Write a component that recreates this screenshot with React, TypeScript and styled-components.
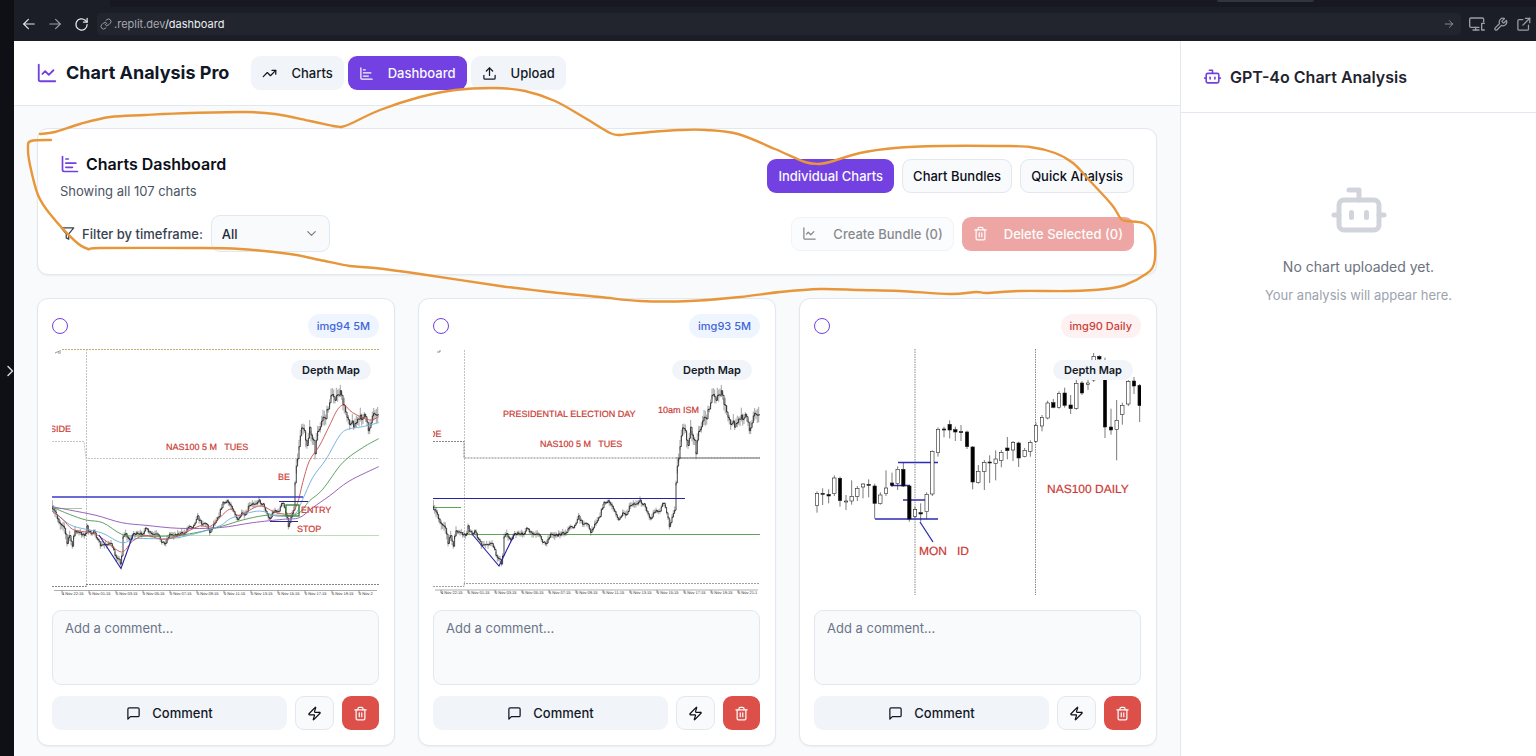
import React from "react";
import styled, { createGlobalStyle, css } from "styled-components";

const Global = createGlobalStyle`
  *, *::before, *::after { box-sizing: border-box; }
  html, body, #root { height: 100%; }
  body {
    margin: 0;
    background: #0e1015;
    color: #0f172a;
    font-family: Inter, "Liberation Sans", sans-serif;
    font-size: 13px;
    line-height: 20px;
    overflow: hidden;
  }
  button, select, textarea, input { font: inherit; color: inherit; margin: 0; }
  h1, h2, p { margin: 0; }
`;

/* ---------- icons ---------- */

const Svg = styled.svg<{ $size?: number; $weight?: number }>`
  width: ${(p) => p.$size ?? 15}px;
  height: ${(p) => p.$size ?? 15}px;
  flex: none;
  fill: none;
  stroke: currentColor;
  stroke-width: ${(p) => p.$weight ?? 2};
  stroke-linecap: round;
  stroke-linejoin: round;
`;

const shapes = {
  line: ["M3 3v16a2 2 0 0 0 2 2h16", "m19 9-5 5-4-4-3 3"],
  bars: ["M3 3v16a2 2 0 0 0 2 2h16", "M7 16h8", "M7 11h12", "M7 6h3"],
  trend: ["M22 7 13.5 15.5 8.5 10.5 2 17", "M16 7h6v6"],
  upload: ["M21 15v4a2 2 0 0 1-2 2H5a2 2 0 0 1-2-2v-4", "M17 8l-5-5-5 5", "M12 3v12"],
  bot: ["M12 8V4H8", "M6 8h12a2 2 0 0 1 2 2v8a2 2 0 0 1-2 2H6a2 2 0 0 1-2-2v-8a2 2 0 0 1 2-2z", "M2 14h2", "M20 14h2", "M15 13v2", "M9 13v2"],
  filter: ["M22 3H2l8 9.46V19l4 2v-8.54z"],
  down: ["m6 9 6 6 6-6"],
  trash: ["M3 6h18", "M19 6v14c0 1-1 2-2 2H7c-1 0-2-1-2-2V6", "M8 6V4c0-1 1-2 2-2h4c1 0 2 1 2 2v2", "M10 11v6", "M14 11v6"],
  message: ["M21 15a2 2 0 0 1-2 2H7l-4 4V5a2 2 0 0 1 2-2h14a2 2 0 0 1 2 2z"],
  zap: ["M4 14a1 1 0 0 1-.78-1.63l9.9-10.2a.5.5 0 0 1 .86.46l-1.92 6.02A1 1 0 0 0 13 10h7a1 1 0 0 1 .78 1.63l-9.9 10.2a.5.5 0 0 1-.86-.46l1.92-6.02A1 1 0 0 0 11 14z"],
  left: ["M21 12H3", "M11 4l-8 8 8 8"],
  right: ["M3 12h18", "M13 4l8 8-8 8"],
  reload: ["M21 12a9 9 0 1 1-3-6.7L21 8", "M21 2v6h-6"],
  link: ["M10 13a5 5 0 0 0 7.54.54l3-3a5 5 0 0 0-7.07-7.07l-1.72 1.71", "M14 11a5 5 0 0 0-7.54-.54l-3 3a5 5 0 0 0 7.07 7.07l1.71-1.71"],
  devices: ["M15 17H3a2 2 0 0 1-2-2V5a2 2 0 0 1 2-2h17a2 2 0 0 1 2 2v4", "M10 17v4", "M6 21h9", "M23 11h-4v10h4"],
  wrench: ["M14.7 6.3a1 1 0 0 0 0 1.4l1.6 1.6a1 1 0 0 0 1.4 0l3.77-3.77a6 6 0 0 1-7.94 7.94l-6.91 6.91a2.12 2.12 0 0 1-3-3l6.91-6.91a6 6 0 0 1 7.94-7.94l-3.76 3.76z"],
  external: ["M11 4H5a2 2 0 0 0-2 2v13a2 2 0 0 0 2 2h13a2 2 0 0 0 2-2v-6", "M15 2h7v7", "M11 13 22 2"],
  chevron: ["m12 3 9 9-9 9"],
};

function Icon({ name, size, weight }: { name: keyof typeof shapes; size?: number; weight?: number }) {
  return (
    <Svg viewBox="0 0 24 24" $size={size} $weight={weight} aria-hidden="true">
      {shapes[name].map((d) => (
        <path key={d} d={d} />
      ))}
    </Svg>
  );
}

/* ---------- shell ---------- */

const Shell = styled.div`
  position: relative;
  display: flex;
  height: 100vh;
  overflow: hidden;
`;

const Rail = styled.aside`
  flex: 0 0 14px;
  display: flex;
  align-items: center;
  justify-content: flex-end;
  padding-bottom: 14px;
  background: #0e1015;
`;

const RailButton = styled.button`
  display: flex;
  padding: 0;
  border: 0;
  background: none;
  color: #d4d6da;
`;

const Browser = styled.div`
  flex: 1;
  min-width: 0;
  display: flex;
  flex-direction: column;
`;

const TabStrip = styled.div`
  flex: 0 0 7px;
  display: flex;
  background: #171822;
`;

const ActiveTab = styled.div`
  width: 96px;
  background: #1b1e26;
`;

const StripHandle = styled.div`
  width: 97px;
  height: 2px;
  margin-left: auto;
  margin-right: 222px;
  border-radius: 0 0 3px 3px;
  background: #32343e;
`;

const AddressBar = styled.div`
  flex: 0 0 34px;
  display: flex;
  align-items: center;
  gap: 8px;
  padding: 0 5px 0 8px;
  background: #1b1e26;
  color: #9a9da5;
`;

const BarButton = styled.button<{ $bright?: boolean }>`
  display: flex;
  padding: 0;
  border: 0;
  background: none;
  color: ${(p) => (p.$bright ? "#e3e5e9" : "#9a9da5")};
`;

const NavButtons = styled.div`
  display: flex;
  align-items: center;
  gap: 12px;
`;

const Address = styled.div`
  flex: 1;
  display: flex;
  align-items: center;
  height: 22px;
  gap: 2px;
  padding: 0 7px 0 3px;
  border-radius: 4px;
  background: #22252e;
  font-size: 11px;
  line-height: 16px;
`;

const Url = styled.span`
  flex: 1;
  color: #a5a8b0;
  b { font-weight: 400; color: #eceef1; }
`;

const Page = styled.div`
  flex: 1;
  min-height: 0;
  display: flex;
  background: #f8fafc;
`;

const Main = styled.main`
  flex: 1;
  min-width: 0;
`;

/* ---------- app header ---------- */

const Header = styled.header`
  display: flex;
  align-items: center;
  gap: 22px;
  height: 65px;
  padding: 0 22px;
  background: #fff;
  border-bottom: 1px solid #e2e8f0;
`;

const Brand = styled.h1`
  display: flex;
  align-items: center;
  gap: 8px;
  font-size: 18px;
  line-height: 26px;
  font-weight: 700;
  color: #111827;
  svg { color: #7240e0; }
`;

const Nav = styled.nav`
  display: flex;
  gap: 4px;
`;

type Tone = "muted" | "primary" | "outline" | "danger";

const tones = {
  muted: css`background: #f1f5f9; color: #111827;`,
  primary: css`background: #7340e2; color: #f8fafc;`,
  outline: css`background: #f8fafc; color: #0b0f19; border-color: #e2e8f0;`,
  danger: css`background: #dc5049; color: #f8fafc;`,
};

const Button = styled.button<{ $tone: Tone; $grow?: boolean; $gap?: number; $pad?: number }>`
  display: flex;
  align-items: center;
  justify-content: center;
  flex: ${(p) => (p.$grow ? "1" : "none")};
  gap: ${(p) => p.$gap ?? 14}px;
  height: 34px;
  padding: 0 ${(p) => p.$pad ?? 10}px;
  border: 1px solid transparent;
  border-radius: 9px;
  font-weight: 500;
  white-space: nowrap;
  ${(p) => tones[p.$tone]}
  &:disabled { opacity: 0.5; }
`;

/* ---------- dashboard ---------- */

const Content = styled.div`
  display: grid;
  gap: 23px;
  padding: 22px 23px;
`;

const Card = styled.section`
  min-width: 0;
  background: #fff;
  border: 1px solid #e2e8f0;
  border-radius: 11px;
  box-shadow: 0 1px 2px rgba(15, 23, 42, 0.05);
`;

const Summary = styled(Card)`
  display: grid;
  gap: 14px;
  padding: 22px;
`;

const Row = styled.div`
  display: flex;
  align-items: center;
  justify-content: space-between;
  gap: 8px;
`;

const Group = styled.div`
  display: flex;
  align-items: center;
  gap: 8px;
`;

const Title = styled.h2`
  display: flex;
  align-items: center;
  gap: 6px;
  margin-bottom: 4px;
  font-size: 16px;
  line-height: 26px;
  font-weight: 600;
  color: #0b0f19;
  svg { color: #7240e0; }
`;

const Sub = styled.p`
  color: #4b5563;
`;

const FilterLabel = styled.label`
  display: flex;
  align-items: center;
  gap: 7px;
  font-weight: 500;
  color: #374151;
`;

const SelectBox = styled.div`
  display: grid;
  align-items: center;
  width: 119px;
  color: #1f2937;
  select, svg { grid-area: 1 / 1; }
  svg { justify-self: end; margin-right: 11px; color: #7b818c; pointer-events: none; }
`;

const Select = styled.select`
  appearance: none;
  width: 100%;
  height: 37px;
  padding: 0 10px;
  border: 1px solid #e2e8f0;
  border-radius: 9px;
  background: #f8fafc;
  font-weight: 500;
`;

const Grid = styled.div`
  display: grid;
  grid-template-columns: repeat(3, minmax(0, 1fr));
  gap: 23px;
`;

const ChartCard = styled(Card)`
  display: flex;
  flex-direction: column;
  gap: 11px;
  padding: 15px 15px 15px 14px;
`;

const CardTop = styled(Row)`
  height: 24px;
`;

const Pick = styled.input`
  appearance: none;
  width: 16px;
  height: 16px;
  border: 1px solid #7240e0;
  border-radius: 50%;
  background: #fff;
`;

const Tag = styled.span<{ $red?: boolean }>`
  padding: 2px 9px;
  border-radius: 12px;
  font-size: 11px;
  font-weight: 500;
  color: ${(p) => (p.$red ? "#cc3d38" : "#3f66d8")};
  background: ${(p) => (p.$red ? "#fdf1f1" : "#eff5fe")};
`;

const Frame = styled.div`
  position: relative;
  svg { display: block; width: 100%; height: auto; }
`;

const Depth = styled.button`
  position: absolute;
  top: 11px;
  right: 8px;
  height: 20px;
  padding: 0 11px;
  border: 0;
  border-radius: 10px;
  background: #f1f5f9;
  color: #111827;
  font-size: 11px;
  line-height: 20px;
  font-weight: 600;
`;

const Comment = styled.textarea`
  display: block;
  width: 100%;
  height: 75px;
  margin-top: 4px;
  padding: 7px 12px;
  border: 1px solid #e2e8f0;
  border-radius: 9px;
  background: #f8fafc;
  resize: none;
  &::placeholder { color: #6b7588; opacity: 1; }
`;

/* ---------- analysis panel ---------- */

const Panel = styled.aside`
  flex: 0 0 356px;
  background: #fff;
  border-left: 1px solid #e2e8f0;
`;

const PanelHead = styled.header`
  display: flex;
  align-items: center;
  height: 72px;
  padding: 0 22px;
  border-bottom: 1px solid #e2e8f0;
`;

const PanelTitle = styled.h2`
  display: flex;
  align-items: center;
  gap: 8px;
  font-size: 16px;
  line-height: 26px;
  font-weight: 600;
  color: #1f2430;
  svg { color: #7240e0; }
`;

const Empty = styled.div`
  display: flex;
  flex-direction: column;
  align-items: center;
  padding-top: 67px;
  color: #9ca3af;
  > svg { color: #d1d5db; margin-bottom: 16px; }
`;

const EmptyTitle = styled.p`
  margin-bottom: 7px;
  font-size: 14px;
  line-height: 22px;
  color: #6b7280;
`;

/* ---------- chart drawings ---------- */

type Pt = [number, number];

/* Source points are in thirds of a drawing unit, measured from (48, 159). */
const local = ([x, y]: Pt): Pt => [(x - 48) / 3, (y - 159) / 3];

function smooth(points: Pt[]) {
  let d = `M${points[0][0]} ${points[0][1]}`;
  for (let i = 0; i < points.length - 1; i++) {
    const a = points[Math.max(0, i - 1)];
    const b = points[i];
    const c = points[i + 1];
    const e = points[Math.min(points.length - 1, i + 2)];
    d += `C${b[0] + (c[0] - a[0]) / 6} ${b[1] + (c[1] - a[1]) / 6} ${c[0] - (e[0] - b[0]) / 6} ${c[1] - (e[1] - b[1]) / 6} ${c[0]} ${c[1]}`;
  }
  return d;
}

const price: Pt[] = [
  [48, 635], [54, 648], [62, 655], [70, 680], [82, 685], [88, 705], [92, 750], [100, 712], [108, 760], [114, 705], [130, 712], [149, 715],
  [151, 685], [158, 705], [165, 718], [175, 700], [185, 735], [195, 750], [215, 742], [228, 748], [238, 780], [247, 785], [255, 812], [259, 740],
  [262, 712], [270, 715], [279, 735], [292, 712], [310, 718], [330, 700], [345, 715], [365, 718], [385, 745], [400, 716],
  [430, 715], [445, 712], [460, 688], [472, 692], [483, 660], [495, 680], [510, 682], [522, 708], [535, 680], [550, 655], [560, 622],
  [575, 618], [590, 635], [605, 675], [615, 655], [630, 660], [635, 635], [650, 625], [668, 614], [685, 630], [700, 672], [715, 640],
  [725, 650], [740, 620], [750, 650], [757, 695], [765, 660], [774, 640], [776, 560], [782, 505], [787, 470], [796, 385], [805, 400],
  [812, 450], [822, 398], [832, 430], [837, 475], [842, 415], [852, 400], [860, 360], [868, 370], [880, 320], [890, 290], [900, 310],
  [912, 288], [925, 335], [940, 375], [955, 385], [970, 370], [985, 355], [998, 405], [1008, 360], [1020, 345], [1029, 375],
];

function buildBars() {
  let wicks = "";
  let closes = "";
  let seed = 7;
  const rand = () => {
    seed = (seed * 16807) % 2147483647;
    return seed / 2147483647;
  };
  let k = 0;
  for (let x = 49; x < 1029; x += 4) {
    while (k < price.length - 2 && price[k + 1][0] < x) k++;
    const a = price[k];
    const b = price[k + 1];
    const swing = x > 776 ? 2 : x < 120 ? 1.5 : 1;
    const y = a[1] + ((b[1] - a[1]) * (x - a[0])) / (b[0] - a[0]) + (rand() - 0.5) * 10 * swing;
    const [px, py] = local([x, y]);
    wicks += `M${px.toFixed(1)} ${(py - (1 + rand() * 3) * swing).toFixed(1)}V${(py + (1 + rand() * 3) * swing).toFixed(1)}`;
    closes += closes ? `V${py.toFixed(1)}H${(px + 1.3).toFixed(1)}` : `M${px.toFixed(1)} ${py.toFixed(1)}`;
  }
  return { wicks, closes };
}

const bars = buildBars();

const averages: { color: string; points: Pt[] }[] = [
  { color: "#9050b8", points: [[48, 632], [100, 642], [180, 658], [257, 680], [330, 688], [430, 697], [550, 695], [650, 680], [740, 670], [790, 665], [830, 635], [880, 600], [940, 555], [1028, 512]] },
  { color: "#4f9450", points: [[48, 633], [100, 655], [150, 672], [200, 680], [257, 715], [300, 720], [400, 720], [480, 710], [560, 690], [620, 672], [690, 658], [780, 655], [820, 615], [860, 580], [920, 500], [980, 455], [1028, 428]] },
  { color: "#6aaade", points: [[48, 640], [100, 685], [150, 700], [200, 712], [257, 740], [300, 728], [400, 728], [470, 715], [550, 690], [590, 665], [670, 645], [720, 660], [775, 655], [800, 610], [830, 545], [870, 490], [910, 420], [935, 400], [980, 392], [1028, 380]] },
  { color: "#c8504c", points: [[48, 645], [80, 670], [110, 700], [150, 708], [180, 715], [210, 735], [257, 768], [290, 735], [330, 718], [380, 730], [430, 718], [490, 690], [525, 690], [580, 640], [610, 658], [670, 630], [720, 650], [765, 652], [785, 620], [800, 560], [820, 495], [850, 450], [880, 390], [905, 340], [925, 328], [950, 350], [1000, 372], [1028, 362]] },
];

const Note = styled.text`
  font-family: "Liberation Sans", Arial, sans-serif;
  font-size: 9px;
  fill: #cb3a34;
  stroke: #cb3a34;
  stroke-width: 0.2;
  white-space: pre;
  text-rendering: geometricPrecision;
`;

const BigNote = styled(Note)`
  font-size: 12px;
`;

const Tick = styled.text`
  font-family: "Liberation Sans", Arial, sans-serif;
  font-size: 4px;
  fill: #333;
  text-rendering: geometricPrecision;
`;

const Drawing = styled.svg`
  overflow: hidden;
`;

const times = ["4 Nov 22:15", "5 Nov 01:15", "5 Nov 03:15", "5 Nov 05:15", "5 Nov 07:15", "5 Nov 09:15", "5 Nov 11:15", "5 Nov 13:15", "5 Nov 15:15", "5 Nov 17:15", "5 Nov 19:15"];

function TimeAxis({ start, y, last }: { start: number; y: number; last: string }) {
  return (
    <g>
      <path d={`M2 ${y}H325`} stroke="#777" strokeWidth="0.6" />
      {[...times, last].map((t, i) => (
        <g key={t}>
          <path d={`M${start + i * 27} ${y}v3`} stroke="#555" strokeWidth="0.6" />
          <Tick x={start + i * 27} y={y + 4}>{t}</Tick>
        </g>
      ))}
    </g>
  );
}

function PriceBars() {
  return (
    <>
      <path d={bars.wicks} stroke="#666" strokeWidth="0.6" fill="none" />
      <path d={bars.closes} stroke="#111" strokeWidth="0.8" fill="none" />
    </>
  );
}

function TrendChart() {
  return (
    <Drawing viewBox="0 0 327 246" role="img" aria-label="NAS100 5 minute chart with moving averages">
      <path d="M10 .5H327" stroke="#b5a860" strokeWidth="0.9" strokeDasharray="2 1" />
      <path d="M3 4l2-1 1 0 1-1 2 0M6 4h3" stroke="#777" strokeWidth="0.8" fill="none" />
      <path d="M34.500 0V238" stroke="#b4b4b4" strokeWidth="0.8" strokeDasharray="2 1" />
      <path d="M0 92.500H32L34 109.500H327" stroke="#aaa" strokeWidth="0.7" strokeDasharray="2 1" fill="none" />
      <path d="M0 237.500H34V235.500H327" stroke="#666" strokeWidth="0.8" strokeDasharray="2 1" fill="none" />
      <path d="M0 159.500H30" stroke="#7fb56c" strokeWidth="0.7" />
      <path d="M88 186.500H327" stroke="#b4dcae" strokeWidth="0.9" />
      <PriceBars />
      {averages.map((a) => (
        <path key={a.color} d={smooth(a.points.map(local))} stroke={a.color} strokeWidth="0.9" fill="none" />
      ))}
      <path d="M47 186L69 219.500L81 186" stroke="#2823a0" strokeWidth="1.100" fill="none" />
      <path d="M0 148H251" stroke="#3a3acb" strokeWidth="1.500" />
      <path d="M227 152.500H256M218 172.500H246" stroke="#2a2890" strokeWidth="1.200" />
      <rect x="234" y="156" width="13" height="11" fill="none" stroke="#2d7a2c" strokeWidth="1.300" />
      <Note x="-2" y="82.500">SIDE</Note>
      <Note x="114" y="101">{"NAS100 5 M   TUES"}</Note>
      <Note x="226" y="131">BE</Note>
      <Note x="249" y="164">ENTRY</Note>
      <Note x="245" y="183">STOP</Note>
      <TimeAxis start={10} y={241.5} last="5 Nov 2" />
    </Drawing>
  );
}

function ElectionChart() {
  return (
    <Drawing viewBox="0 0 327 246" role="img" aria-label="NAS100 5 minute chart on election day">
      <path d="M4 3h3V1" stroke="#777" strokeWidth="0.8" fill="none" />
      <path d="M31.500 1V236" stroke="#b4b4b4" strokeWidth="0.8" strokeDasharray="2 1" />
      <path d="M0 92.500H31V109H327" stroke="#777" strokeWidth="0.9" strokeDasharray="2 1" fill="none" />
      <path d="M243 109H327" stroke="#777" strokeWidth="0.9" />
      <path d="M0 237.500H31V234.500H327" stroke="#888" strokeWidth="0.8" strokeDasharray="2 1" fill="none" />
      <path d="M0 158.500H28M32 185.500H327" stroke="#5fa356" strokeWidth="1" />
      <PriceBars />
      <path d="M39 185L66 217L81 186" stroke="#2823a0" strokeWidth="1.100" fill="none" />
      <path d="M0 149.500H252" stroke="#2424a0" strokeWidth="1.200" />
      <Note x="-4" y="88">DE</Note>
      <Note x="70" y="67.500">PRESIDENTIAL ELECTION DAY</Note>
      <Note x="225" y="63.500">10am ISM</Note>
      <Note x="107" y="97.500">{"NAS100 5 M   TUES"}</Note>
      <TimeAxis start={8} y={241} last="5 Nov 21:1" />
    </Drawing>
  );
}

/* x, high, body top, body bottom, low, filled */
const candles: [number, number, number, number, number, number][] = [
  [57, 586, 593, 629, 650, 0], [74, 577, 592, 595, 627, 1], [92, 580, 595, 600, 622, 1], [109, 538, 546, 593, 600, 0], [126, 542, 547, 614, 632, 1],
  [144, 597, 615, 617, 642, 0], [161, 553, 601, 615, 626, 0], [178, 570, 577, 601, 615, 0], [195, 562, 564, 573, 607, 0], [212, 550, 565, 568, 604, 1],
  [230, 563, 570, 622, 668, 1], [247, 589, 597, 623, 626, 0], [264, 523, 576, 593, 600, 0], [282, 530, 561, 568, 573, 1], [299, 511, 520, 563, 582, 0],
  [316, 501, 520, 570, 573, 1], [334, 567, 570, 669, 677, 1], [351, 632, 641, 661, 666, 0], [368, 622, 650, 654, 677, 1], [386, 589, 595, 647, 668, 0],
  [403, 463, 466, 594, 600, 0], [420, 394, 400, 470, 482, 0], [438, 392, 399, 402, 424, 1], [455, 373, 385, 402, 427, 1], [472, 392, 401, 408, 435, 1],
  [489, 387, 407, 410, 435, 1], [507, 404, 408, 452, 459, 1], [524, 450, 453, 558, 580, 1], [541, 507, 526, 559, 563, 0], [559, 492, 500, 526, 582, 0],
  [575, 478, 498, 501, 561, 1], [593, 463, 489, 502, 553, 0], [610, 462, 470, 493, 514, 0], [628, 423, 456, 464, 490, 1], [645, 435, 440, 462, 495, 0],
  [662, 437, 441, 486, 513, 1], [680, 456, 463, 482, 484, 0], [697, 433, 440, 466, 482, 0], [714, 380, 389, 436, 440, 0], [732, 357, 364, 390, 406, 0],
  [749, 314, 321, 366, 370, 0], [766, 309, 320, 334, 337, 1], [783, 286, 292, 334, 338, 0], [800, 275, 291, 328, 335, 1], [818, 297, 327, 338, 354, 1],
  [835, 252, 262, 337, 341, 0], [852, 255, 261, 291, 297, 1], [870, 252, 261, 265, 282, 0], [887, 171, 182, 252, 258, 0], [904, 178, 181, 189, 192, 1],
  [921, 185, 225, 393, 426, 1], [939, 338, 393, 402, 416, 1], [956, 312, 373, 401, 493, 0], [973, 320, 328, 355, 386, 0], [991, 252, 257, 324, 330, 0],
  [1008, 243, 255, 270, 294, 1], [1025, 264, 268, 329, 378, 1],
];

function DailyChart() {
  return (
    <Drawing viewBox="0 0 327 246" role="img" aria-label="NAS100 daily candlestick chart">
      <path d="M101 0V246M221.500 0V246" stroke="#888" strokeWidth="1" strokeDasharray="1.500 1" />
      <path d="M84 113.500H124M77 136.500H96M89 151H111M61 170H124M106 173L119 193" stroke="#2c2bb4" strokeWidth="1.300" fill="none" />
      {candles.map(([x, high, top, bottom, low, filled]) => {
        const [cx, t] = local([x, top]);
        const h = Math.max((bottom - top) / 3, 1);
        return (
          <g key={x} stroke="#222" strokeWidth="0.6">
            <path d={`M${cx} ${(high - 159) / 3}V${t}M${cx} ${t + h}V${(low - 159) / 3}`} />
            <rect x={cx - 1.7} y={t} width="3.400" height={h} fill={filled ? "#000" : "#fff"} />
          </g>
        );
      })}
      <BigNote x="233" y="143.500">NAS100 DAILY</BigNote>
      <BigNote x="105" y="205.500">{"MON   ID"}</BigNote>
    </Drawing>
  );
}

/* ---------- freehand marker line ---------- */

const Marker = styled.svg`
  position: absolute;
  top: 0;
  left: 0;
  width: 1536px;
  height: 756px;
  pointer-events: none;
  fill: none;
  stroke: #e8963a;
  stroke-width: 2.400;
  stroke-linecap: round;
  stroke-linejoin: round;
`;

const strokes: Pt[][] = [
  [[40, 134], [55, 132], [80, 124], [110, 117], [145, 115], [190, 113], [245, 112], [275, 114], [310, 121], [333, 126], [341, 127]],
  [[341, 127], [350, 124], [380, 110], [420, 97], [455, 90], [495, 88], [525, 91], [555, 101], [585, 118], [610, 133], [620, 135]],
  [[620, 135], [650, 132], [680, 130], [706, 130], [738, 134], [775, 149], [805, 162], [819, 164]],
  [[819, 164], [830, 162], [860, 153], [895, 148], [940, 146], [1000, 146], [1030, 147], [1055, 153], [1073, 163], [1090, 181], [1112, 205], [1121, 219], [1127, 221], [1143, 223], [1152, 231], [1155, 245], [1154, 264], [1146, 274], [1125, 285], [1105, 289], [1070, 291], [1020, 291], [987, 293], [976, 292], [950, 294], [900, 291], [860, 290], [820, 289], [780, 292], [740, 297], [690, 301], [640, 301], [600, 297], [550, 292], [500, 286], [420, 274], [375, 268], [350, 266], [320, 260], [290, 254], [240, 249], [190, 248], [100, 248], [88, 249], [75, 241], [50, 214], [38, 195], [30, 165], [28, 148], [31, 141], [51, 140]],
];

/* ---------- page ---------- */

const charts = [
  { id: "img94 5M", Chart: TrendChart },
  { id: "img93 5M", Chart: ElectionChart },
  { id: "img90 Daily", red: true, Chart: DailyChart },
];

export default function App() {
  return (
    <Shell>
      <Global />
      <Rail>
        <RailButton aria-label="Open sidebar"><Icon name="chevron" size={12} weight={3} /></RailButton>
      </Rail>
      <Browser>
        <TabStrip>
          <ActiveTab />
          <StripHandle />
        </TabStrip>
        <AddressBar>
          <NavButtons>
            <BarButton $bright aria-label="Back"><Icon name="left" size={14} /></BarButton>
            <BarButton aria-label="Forward"><Icon name="right" size={14} /></BarButton>
            <BarButton $bright aria-label="Reload"><Icon name="reload" size={15} /></BarButton>
          </NavButtons>
          <Address>
            <Icon name="link" size={12} weight={2} />
            <Url>.replit.dev<b>/dashboard</b></Url>
            <BarButton aria-label="Go"><Icon name="right" size={10} /></BarButton>
          </Address>
          <BarButton aria-label="Devices"><Icon name="devices" size={16} /></BarButton>
          <BarButton aria-label="Tools"><Icon name="wrench" /></BarButton>
          <BarButton aria-label="Open in new tab"><Icon name="external" /></BarButton>
        </AddressBar>
        <Page>
          <Main>
            <Header>
              <Brand><Icon name="line" size={22} />Chart Analysis Pro</Brand>
              <Nav>
                <Button $tone="muted"><Icon name="trend" />Charts</Button>
                <Button $tone="primary"><Icon name="bars" />Dashboard</Button>
                <Button $tone="muted"><Icon name="upload" />Upload</Button>
              </Nav>
            </Header>
            <Content>
              <Summary>
                <Row>
                  <div>
                    <Title><Icon name="bars" size={20} />Charts Dashboard</Title>
                    <Sub>Showing all 107 charts</Sub>
                  </div>
                  <Group>
                    <Button $tone="primary">Individual Charts</Button>
                    <Button $tone="outline">Chart Bundles</Button>
                    <Button $tone="outline">Quick Analysis</Button>
                  </Group>
                </Row>
                <Row>
                  <Group>
                    <FilterLabel htmlFor="timeframe"><Icon name="filter" />Filter by timeframe:</FilterLabel>
                    <SelectBox>
                      <Select id="timeframe" defaultValue="All"><option>All</option></Select>
                      <Icon name="down" />
                    </SelectBox>
                  </Group>
                  <Group>
                    <Button $tone="outline" $gap={16} disabled><Icon name="line" />Create Bundle (0)</Button>
                    <Button $tone="danger" $gap={16} disabled><Icon name="trash" />Delete Selected (0)</Button>
                  </Group>
                </Row>
              </Summary>
              <Grid>
                {charts.map(({ id, red, Chart }) => (
                  <ChartCard key={id}>
                    <CardTop>
                      <Pick type="checkbox" aria-label={`Select ${id}`} />
                      <Tag $red={red}>{id}</Tag>
                    </CardTop>
                    <Frame>
                      <Chart />
                      <Depth>Depth Map</Depth>
                    </Frame>
                    <Comment placeholder="Add a comment..." aria-label={`Comment on ${id}`} />
                    <Group>
                      <Button $tone="muted" $grow $gap={11}><Icon name="message" />Comment</Button>
                      <Button $tone="outline" $pad={11} aria-label="Analyze"><Icon name="zap" /></Button>
                      <Button $tone="danger" aria-label="Delete"><Icon name="trash" /></Button>
                    </Group>
                  </ChartCard>
                ))}
              </Grid>
            </Content>
          </Main>
          <Panel>
            <PanelHead>
              <PanelTitle><Icon name="bot" size={19} />GPT-4o Chart Analysis</PanelTitle>
            </PanelHead>
            <Empty>
              <Icon name="bot" size={60} />
              <EmptyTitle>No chart uploaded yet.</EmptyTitle>
              <p>Your analysis will appear here.</p>
            </Empty>
          </Panel>
        </Page>
      </Browser>
      <Marker viewBox="0 0 1536 756" aria-hidden="true">
        {strokes.map((s, i) => (
          <path key={i} d={smooth(s)} />
        ))}
      </Marker>
    </Shell>
  );
}
